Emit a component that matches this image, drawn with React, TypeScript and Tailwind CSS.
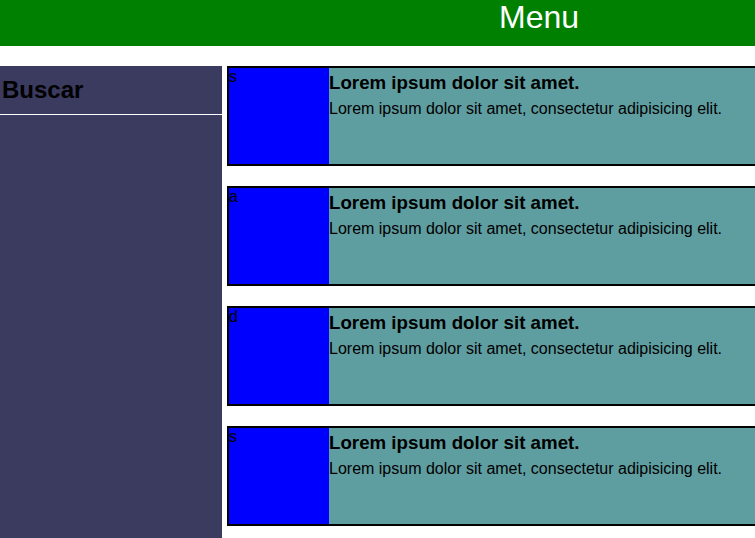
const cards = [
  { letter: "s" },
  { letter: "a" },
  { letter: "d" },
  { letter: "s" },
];

export default function App() {
  return (
    <div className="w-full overflow-hidden bg-white font-['Liberation_Sans',Arial,sans-serif] text-black">
      <div className="w-[1078px]">
        {/* Header */}
        <header className="h-[46px] bg-[#008000] text-center">
          <h1 className="text-[32px] leading-[35px] text-white">Menu</h1>
        </header>

        <div className="mt-[20px] flex gap-[5px]">
          {/* Sidebar */}
          <aside className="w-[222px] shrink-0 bg-[#3b3a5f]">
            <h2 className="border-b border-white py-[10px] pl-[2px] text-[24px] font-bold leading-[28px]">
              Buscar
            </h2>
          </aside>

          {/* Cards */}
          <section className="flex flex-1 flex-col">
            {cards.map((card, i) => (
              <div
                key={i}
                className="mb-[20px] flex h-[100px] border-2 border-black bg-[#5f9ea0]"
              >
                <div className="w-[100px] shrink-0 bg-[#0000ff] text-[16px] leading-[18px]">
                  {card.letter}
                </div>
                <div>
                  <h3 className="mt-[4px] text-[18.72px] font-bold leading-[21px]">
                    Lorem ipsum dolor sit amet.
                  </h3>
                  <p className="mt-[7px] text-[16px] leading-[18px]">
                    Lorem ipsum dolor sit amet, consectetur adipisicing elit.
                  </p>
                </div>
              </div>
            ))}
          </section>
        </div>
      </div>
    </div>
  );
}
